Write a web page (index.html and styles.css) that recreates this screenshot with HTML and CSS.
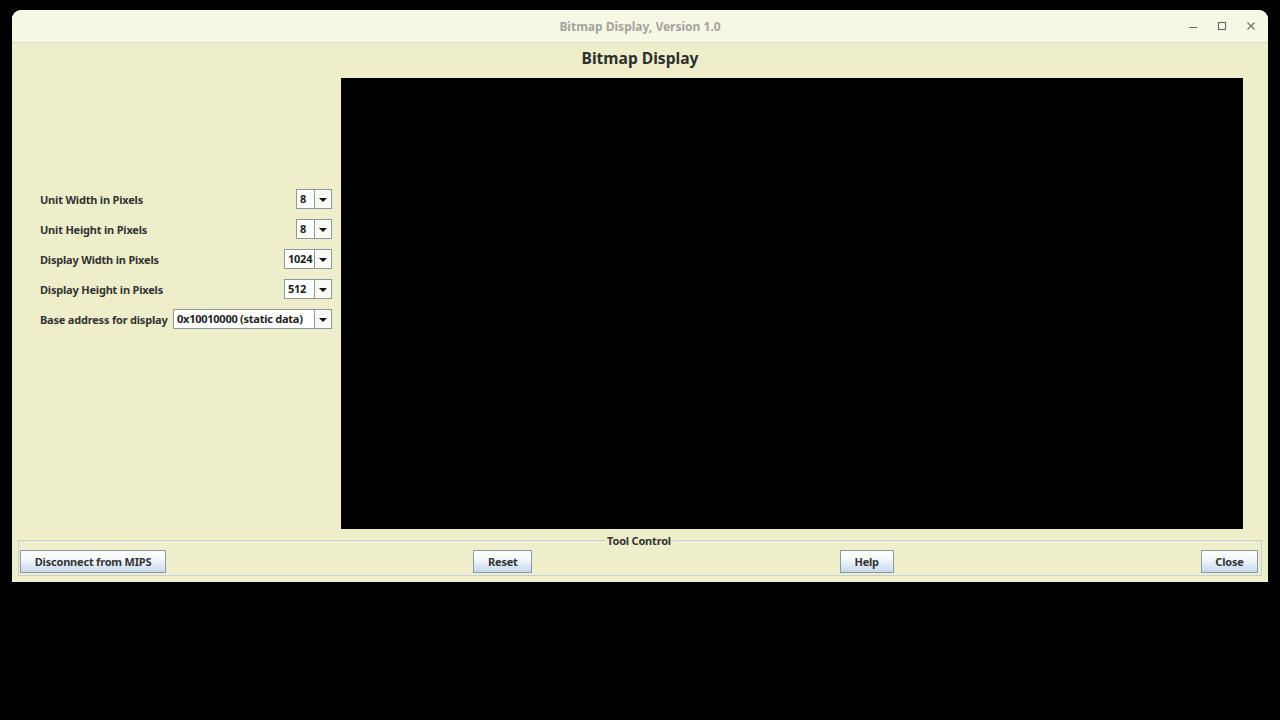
FILE: index.html
```html
<!DOCTYPE html>
<html>
<head>
<meta charset="utf-8">
<link rel="stylesheet" href="styles.css">
<title>Bitmap Display</title>
</head>
<body>
<div class="window">
  <div class="titlebar">
    <div class="title">Bitmap Display, Version 1.0</div>
    <div class="wincontrols">
      <svg class="wc" width="12" height="12" viewBox="0 0 12 12"><path d="M2 7.5h8" stroke="#666" stroke-width="1.2"/></svg>
      <svg class="wc" width="12" height="12" viewBox="0 0 12 12"><rect x="2.5" y="2.5" width="7" height="7" fill="none" stroke="#666" stroke-width="1.1"/></svg>
      <svg class="wc" width="12" height="12" viewBox="0 0 12 12"><path d="M2.5 2.5l7 7M9.5 2.5l-7 7" stroke="#777" stroke-width="1.3"/></svg>
    </div>
  </div>
  <div class="content">
    <h1 class="heading">Bitmap Display</h1>
    <div class="main">
      <div class="settings">
        <div class="row"><span class="label">Unit Width in Pixels</span><span class="combo w36"><span class="field">8</span><span class="arrow"></span></span></div>
        <div class="row"><span class="label">Unit Height in Pixels</span><span class="combo w36"><span class="field">8</span><span class="arrow"></span></span></div>
        <div class="row"><span class="label">Display Width in Pixels</span><span class="combo w48"><span class="field">1024</span><span class="arrow"></span></span></div>
        <div class="row"><span class="label">Display Height in Pixels</span><span class="combo w48"><span class="field">512</span><span class="arrow"></span></span></div>
        <div class="row"><span class="label">Base address for display</span><span class="combo w159"><span class="field">0x10010000 (static data)</span><span class="arrow"></span></span></div>
      </div>
      <div class="canvas"></div>
    </div>
    <fieldset class="toolcontrol">
      <legend>Tool Control</legend>
      <button class="btn b-disc">Disconnect from MIPS</button>
      <button class="btn b-reset">Reset</button>
      <button class="btn b-help">Help</button>
      <button class="btn b-close">Close</button>
    </fieldset>
  </div>
</div>
</body>
</html>
```
FILE: styles.css
```css
html, body {
  margin: 0;
  padding: 0;
  background: #000;
  width: 1280px;
  height: 720px;
  overflow: hidden;
  font-family: "Noto Sans", "Open Sans", "DejaVu Sans", sans-serif;
}
.window {
  margin: 10px 0 0 12px;
  width: 1256px;
  height: 572px;
  border-radius: 9px 9px 0 0;
  overflow: hidden;
  background: #eeeecb;
  display: flex;
  flex-direction: column;
}
.titlebar {
  height: 32px;
  flex: none;
  background: #f7f7e6;
  border-bottom: 1px solid #dcdccc;
  position: relative;
  display: flex;
  align-items: center;
  justify-content: center;
}
.title {
  font-size: 12px;
  font-weight: 700;
  color: #a4a49c;
}
.wincontrols {
  position: absolute;
  right: 11px;
  top: 10px;
  display: flex;
  gap: 17px;
}
.wc { display: block; }
.content {
  flex: 1;
  display: flex;
  flex-direction: column;
}
.heading {
  margin: 0;
  height: 35px;
  line-height: 31px;
  font-size: 15.6px;
  font-weight: 700;
  color: #2e2e2e;
  text-align: center;
}
.main {
  display: flex;
  height: 451px;
}
.settings {
  padding: 111px 9px 0 28px;
  box-sizing: border-box;
  width: 329px;
  display: flex;
  flex-direction: column;
  gap: 10px;
}
.row {
  height: 20px;
  display: flex;
  align-items: center;
  justify-content: space-between;
}
.label {
  font-size: 11px;
  font-weight: 700;
  color: #333;
  letter-spacing: -0.2px;
}
.combo {
  display: flex;
  height: 20px;
  box-sizing: border-box;
}
.w36 { width: 36px; }
.w48 { width: 48px; }
.w159 { width: 159px; }
.field {
  flex: 1;
  background: #fff;
  border: 1px solid #8c9aa8;
  font-size: 11px;
  font-weight: 700;
  color: #222;
  line-height: 18px;
  padding-left: 3px;
  letter-spacing: -0.25px;
  white-space: nowrap;
  overflow: hidden;
}
.arrow {
  width: 16px;
  flex: none;
  background: #fafaf4;
  border: 1px solid #8c9aa8;
  border-left: none;
  position: relative;
}
.arrow::after {
  content: "";
  position: absolute;
  left: 4px;
  top: 8px;
  border-left: 4px solid transparent;
  border-right: 4px solid transparent;
  border-top: 4px solid #111;
}
.canvas {
  width: 902px;
  height: 451px;
  background: #000;
}
.toolcontrol {
  margin: 6px 6px 0 6px;
  height: 41px;
  box-sizing: border-box;
  border: 1px solid #c4d0dc;
  padding: 0 3px 0 1px;
  display: flex;
  justify-content: space-between;
  align-items: flex-start;
}
.toolcontrol legend {
  margin: 0 auto;
  padding: 0 2px;
  font-size: 11px;
  font-weight: 700;
  color: #333;
  line-height: 1;
  letter-spacing: -0.2px;
}
.btn {
  height: 23px;
  margin-top: 4px;
  border: 1px solid #8c9aa8;
  background: linear-gradient(#ffffff 0%, #f4f8fc 40%, #c6d8ee 100%);
  font-family: "Noto Sans", "Open Sans", sans-serif;
  font-size: 11px;
  font-weight: 700;
  color: #333;
  letter-spacing: -0.2px;
  padding: 0;
  box-sizing: border-box;
}
.b-disc { width: 146px; }
.b-reset { width: 59px; }
.b-help { width: 54px; }
.b-close { width: 57px; }
```
